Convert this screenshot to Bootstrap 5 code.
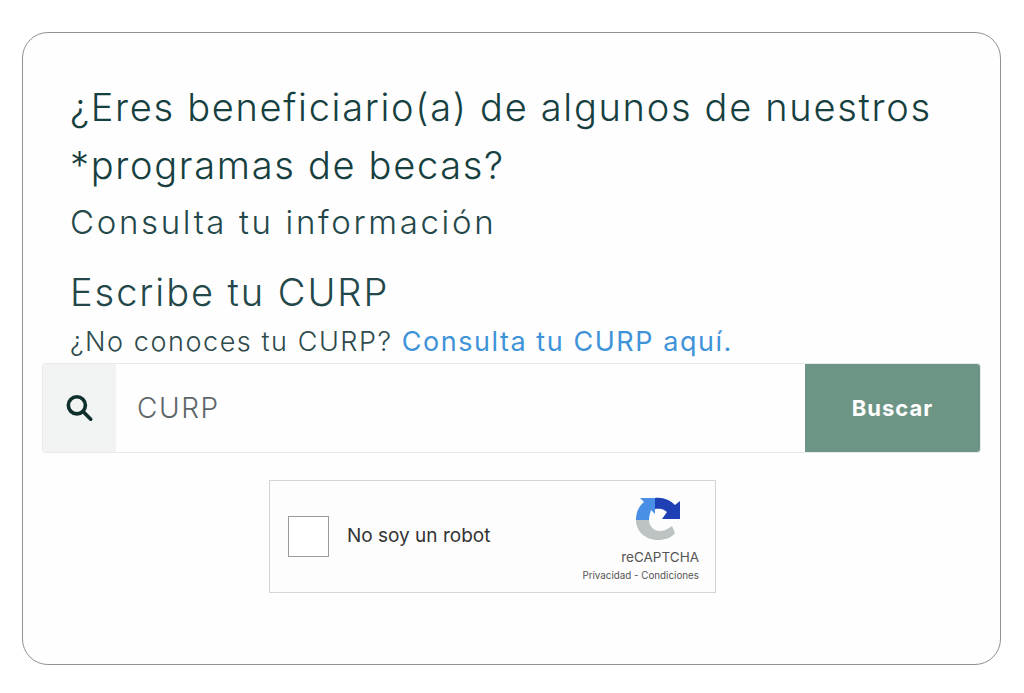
<!DOCTYPE html>
<html lang="es">
<head>
<meta charset="utf-8">
<title>Consulta</title>
<link href="https://cdn.jsdelivr.net/npm/bootstrap@5.3.0/dist/css/bootstrap.min.css" rel="stylesheet">
<style>
html,body{height:693px;overflow:hidden;background:#fff}
body{font-family:"Inter","Noto Sans",sans-serif;padding:32px 23px 28px 22px}
.panel-beca{height:633px;border:1.5px solid #8f9291;border-radius:26px;padding:45px 19px 0 19px;background:#fefefe}
.intro-beca{padding:0 28px;color:#16403f}
.titulo-beca{font-size:38px;font-weight:350;line-height:58px;margin:0;letter-spacing:1.7px;white-space:nowrap}
.consulta-beca{font-size:33px;font-weight:300;line-height:50px;margin:3px 0 0;letter-spacing:2.65px;color:#24484a;white-space:nowrap}
.escribe-beca{font-size:38px;font-weight:350;line-height:46px;margin:22px 0 0;letter-spacing:1.95px;color:#24484a}
.ayuda-beca{font-size:27px;font-weight:300;line-height:36px;margin:9px 0 3px;letter-spacing:1.55px;color:#2e4a4c;white-space:nowrap}
.ayuda-beca a{color:#3f93d9;text-decoration:none;font-weight:400}
.grupo-beca{height:90px;border:1px solid #e8e9e8;border-radius:3px}
.lupa-beca{width:73px;background:#f2f3f3;padding-right:2px}
.campo-beca{font-size:28px;font-weight:300;color:#5f6668;padding-left:21px;letter-spacing:1.6px}
.boton-beca{width:175px;background:#6d9586;color:#fff;font-size:22px;font-weight:700;letter-spacing:1px;border-radius:0 3px 3px 0}
.captcha-beca{width:447px;height:113px;margin:27px 0 0 227px;border:1px solid #d3d5d4;background:#fdfdfd;padding:0 16px 0 18px}
.caja-beca{width:41px;height:41px;border:1.5px solid #9a9c9b;background:#fff}
.robot-beca{font-size:19px;font-weight:400;color:#333;margin-left:18px}
.marca-beca{color:#555;line-height:1.2;text-align:right;padding-top:6px}
.logo-beca{display:block;margin:0 19px 0 auto}
.marca-uno{font-size:13.5px;margin-top:8px}
.marca-dos{font-size:9.8px;white-space:nowrap;margin-top:5px}
</style>
</head>
<body>
<div class="panel-beca">
  <div class="intro-beca">
    <h1 class="titulo-beca">¿Eres beneficiario(a) de algunos de nuestros<br>*programas de becas?</h1>
    <p class="consulta-beca">Consulta tu información</p>
    <h2 class="escribe-beca">Escribe tu CURP</h2>
    <p class="ayuda-beca">¿No conoces tu CURP? <a href="#">Consulta tu CURP aquí.</a></p>
  </div>
  <div class="grupo-beca d-flex align-items-stretch">
    <div class="lupa-beca d-flex align-items-center justify-content-center">
      <svg width="32" height="32" viewBox="0 0 30 30" fill="none" stroke="#0f2f2d" stroke-width="3.4" stroke-linecap="round"><circle cx="13" cy="12.5" r="8"/><line x1="19" y1="18.5" x2="26" y2="25.5"/></svg>
    </div>
    <div class="campo-beca flex-grow-1 d-flex align-items-center">CURP</div>
    <div class="boton-beca d-flex align-items-center justify-content-center">Buscar</div>
  </div>
  <div class="captcha-beca d-flex align-items-center">
    <div class="caja-beca"></div>
    <div class="robot-beca flex-grow-1">No soy un robot</div>
    <div class="marca-beca">
      <svg class="logo-beca" width="44" height="44" viewBox="0 0 44 44">
        <path d="M0 23C0 15 3 9 8 5L4 1H19V17L15 13C14 16 13 20 13 23Z" fill="#4a8fe6"/>
        <path d="M19 1C27 0 34 3 39 8L44 4V22H26L31 15C28 12 24 11 19 12Z" fill="#1f3fb5"/>
        <path d="M0 23H13C13 31 20 34 24 34 28 34 32 32 36 29L39 36C35 41 29 43 22 43 9 43 0 34 0 23Z" fill="#bcc3c2"/>
      </svg>
      <div class="marca-uno">reCAPTCHA</div>
      <div class="marca-dos">Privacidad - Condiciones</div>
    </div>
  </div>
</div>
<script src="https://cdn.jsdelivr.net/npm/bootstrap@5.3.0/dist/js/bootstrap.bundle.min.js"></script>
</body>
</html>
